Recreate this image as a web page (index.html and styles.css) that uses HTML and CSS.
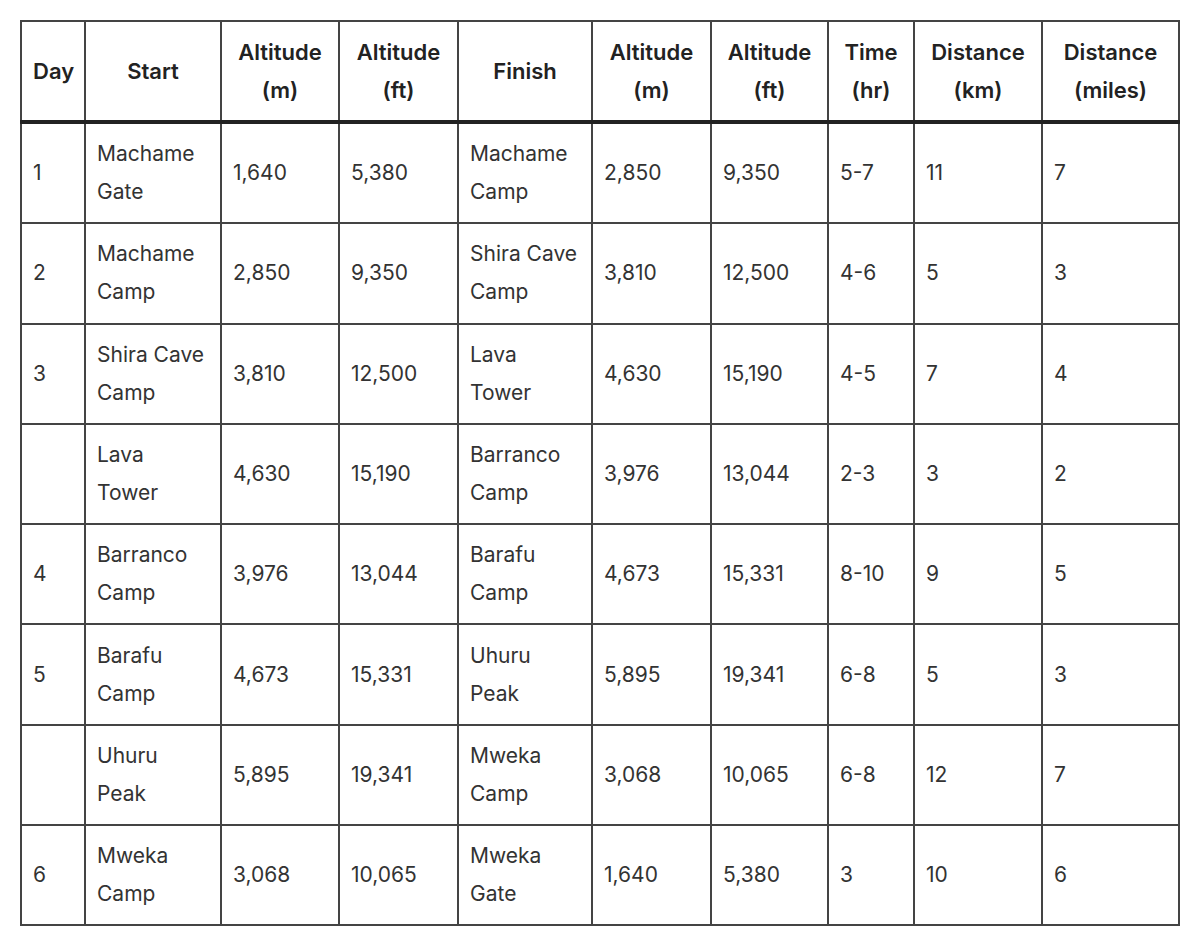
FILE: index.html
```html
<!DOCTYPE html>
<html>
<head>
<meta charset="utf-8">
<link rel="stylesheet" href="styles.css">
</head>
<body>
<table class="route">
  <colgroup>
    <col class="c-day"><col class="c-start"><col class="c-am"><col class="c-aft">
    <col class="c-finish"><col class="c-am2"><col class="c-aft2"><col class="c-time">
    <col class="c-km"><col class="c-mi">
  </colgroup>
  <thead>
    <tr>
      <th>Day</th><th>Start</th><th>Altitude<br>(m)</th><th>Altitude<br>(ft)</th>
      <th>Finish</th><th>Altitude<br>(m)</th><th>Altitude<br>(ft)</th><th>Time<br>(hr)</th>
      <th>Distance<br>(km)</th><th>Distance<br>(miles)</th>
    </tr>
  </thead>
  <tbody>
    <tr><td>1</td><td>Machame<br>Gate</td><td>1,640</td><td>5,380</td><td>Machame<br>Camp</td><td>2,850</td><td>9,350</td><td>5-7</td><td>11</td><td>7</td></tr>
    <tr><td>2</td><td>Machame<br>Camp</td><td>2,850</td><td>9,350</td><td>Shira Cave<br>Camp</td><td>3,810</td><td>12,500</td><td>4-6</td><td>5</td><td>3</td></tr>
    <tr><td>3</td><td>Shira Cave<br>Camp</td><td>3,810</td><td>12,500</td><td>Lava<br>Tower</td><td>4,630</td><td>15,190</td><td>4-5</td><td>7</td><td>4</td></tr>
    <tr><td></td><td>Lava<br>Tower</td><td>4,630</td><td>15,190</td><td>Barranco<br>Camp</td><td>3,976</td><td>13,044</td><td>2-3</td><td>3</td><td>2</td></tr>
    <tr><td>4</td><td>Barranco<br>Camp</td><td>3,976</td><td>13,044</td><td>Barafu<br>Camp</td><td>4,673</td><td>15,331</td><td>8-10</td><td>9</td><td>5</td></tr>
    <tr><td>5</td><td>Barafu<br>Camp</td><td>4,673</td><td>15,331</td><td>Uhuru<br>Peak</td><td>5,895</td><td>19,341</td><td>6-8</td><td>5</td><td>3</td></tr>
    <tr><td></td><td>Uhuru<br>Peak</td><td>5,895</td><td>19,341</td><td>Mweka<br>Camp</td><td>3,068</td><td>10,065</td><td>6-8</td><td>12</td><td>7</td></tr>
    <tr><td>6</td><td>Mweka<br>Camp</td><td>3,068</td><td>10,065</td><td>Mweka<br>Gate</td><td>1,640</td><td>5,380</td><td>3</td><td>10</td><td>6</td></tr>
  </tbody>
</table>
</body>
</html>
```
FILE: styles.css
```css
html, body {
  margin: 0;
  padding: 0;
  background: #ffffff;
}
body {
  padding: 20px 0 0 20px;
  font-family: Inter, "Noto Sans", "Liberation Sans", sans-serif;
  font-size: 21px;
  line-height: 38px;
  color: #333333;
}
.route {
  border-collapse: collapse;
  table-layout: fixed;
  width: 1158px;
}
.c-day { width: 64px; }
.c-start { width: 136px; }
.c-am { width: 118px; }
.c-aft { width: 119px; }
.c-finish { width: 134px; }
.c-am2 { width: 119px; }
.c-aft2 { width: 117px; }
.c-time { width: 86px; }
.c-km { width: 128px; }
.c-mi { width: 137px; }
.route th,
.route td {
  border: 2px solid #444444;
  padding: 0 11px;
}
.route th {
  height: 98px;
  font-size: 22px;
  font-weight: 600;
  color: #222222;
  text-align: center;
  vertical-align: middle;
  border-bottom: 4px solid #222222;
}
.route td {
  height: 98.3px;
  text-align: left;
  vertical-align: middle;
}
```
